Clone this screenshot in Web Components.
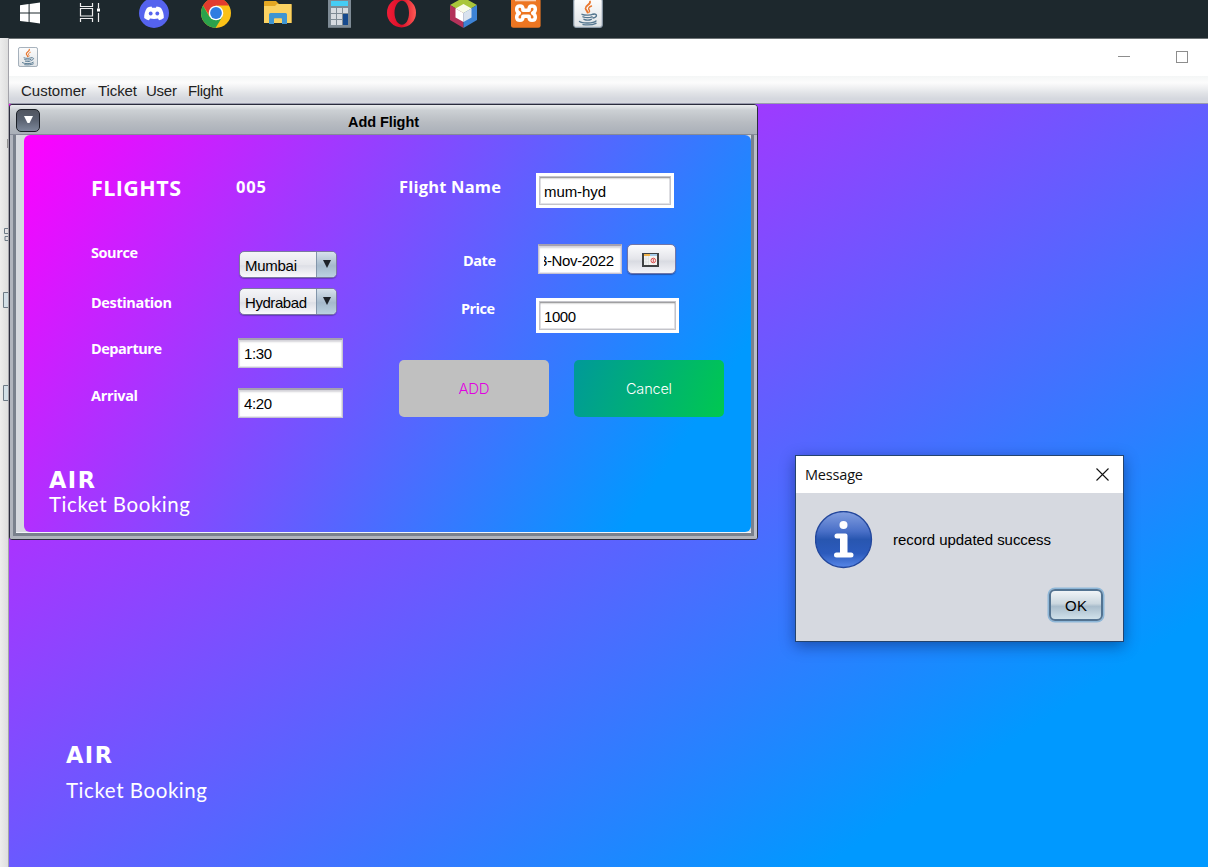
<!DOCTYPE html>
<html lang="en">
<head>
<meta charset="utf-8">
<title>Air Ticket Booking</title>
<style>
body{margin:0;width:1208px;height:867px;overflow:hidden;background:#e9e9e9;font-family:"Liberation Sans",Arial,sans-serif}
</style>
</head>
<body>
<air-app></air-app>
<script>
function define(name, html, setup) {
  const t = document.createElement('template');
  t.innerHTML = html;
  customElements.define(name, class extends HTMLElement {
    constructor() {
      super();
      this.attachShadow({mode: 'open'}).append(t.content.cloneNode(true));
    }
    connectedCallback() { if (setup) setup(this, this.shadowRoot); }
  });
}

/* One line of text, tracked so that it spans the width given in "w". */
define('fit-text', `<style>
:host{display:block;white-space:nowrap;line-height:20px;height:20px;flex:none}
:host([kind=label]){font:bold 14.5px/20px "Open Sans","Noto Sans",sans-serif;color:#fff}
:host([kind=sub]){font:bold 16.5px/20px "Open Sans","Noto Sans",sans-serif;color:#fff}
:host([kind=title]){font:bold 21.5px/30px "Open Sans","Noto Sans",sans-serif;height:30px;color:#fff}
:host([kind=air]){font:bold 22.5px/30px "DejaVu Sans",sans-serif;height:28px;color:#fff}
:host([kind=tag]){font:400 20.5px/26px Lato,sans-serif;height:26px;color:#fff}
:host([kind=swing]){font:15px/20px "Liberation Sans",Arial,sans-serif}
span{display:inline-block}
</style><span><slot></slot></span>`, (el, root) => {
  const s = root.querySelector('span');
  const w = +el.getAttribute('w');
  const n = el.textContent.length;
  if (w && n > 1) {
    const gap = (w - s.getBoundingClientRect().width) / (n - 1);
    s.style.letterSpacing = gap.toFixed(3) + 'px';
    s.style.marginRight = (-gap).toFixed(3) + 'px';
  }
});

define('java-icon', `<style>:host{display:block}svg{display:block;width:100%;height:100%}</style>
<svg viewBox="0 0 30 30"><defs><linearGradient id="g" x2="0" y2="1"><stop stop-color="#fdfdfd"/><stop offset="1" stop-color="#dfe3e6"/></linearGradient></defs>
<rect x=".7" y=".7" width="28.6" height="28.6" rx="2.5" fill="url(#g)" stroke="#8b9aa8" stroke-width="1.2"/>
<g fill="none" stroke-linecap="round"><path d="M17 3.500c1 3-5 4-4.500 7 .2 1.500 2 2.400 2 4" stroke="#e8762d" stroke-width="1.800"/><path d="M18.500 8c-3 1.300-3.500 2.600-2.300 4 .7.900.4 1.800-.4 2.600" stroke="#e8762d" stroke-width="1.400"/>
<path d="M9 16.300c3 1.200 9 1 11-.2M10 18.800c2.500 1 7 1 9 0M11 21.300c2 .9 5.500.9 7.300 0M20.500 16.200c4-1 4 3-.5 3.800M6.500 23.500c3 2.300 14 2 16.500-.5M10 26.600c5 .6 10 .2 13-1.300" stroke="#54768f" stroke-width="1.400"/></g></svg>`);

define('task-bar', `<style>
:host{display:block;height:38px;background:#1d282d;overflow:hidden}
.row{display:flex;height:30px;align-items:flex-start}
svg{display:block;flex:none;overflow:visible}
java-icon{width:30px;height:30px;margin:-2px 0 0 32px;flex:none}
</style>
<div class="row">
<svg style="margin-left:20px" width="20" height="24" viewBox="0 0 20 24" fill="#fff"><path d="M0 5.200 8.600 4v8.500H0zM9.600 3.900 20 2.500v10H9.600zM0 13.500h8.600v8.600L0 20.900zM9.600 13.500H20v10l-10.400-1.400z"/></svg>
<svg style="margin-left:39px" width="22" height="24" viewBox="0 0 22 24" fill="none" stroke="#eee" stroke-width="1.200"><path d="M1.500 3v3.500h12V3M1.500 22v-3.500h12V22M1.500 8.500v7.500h12V8.500zM19.500 3v5.500M19.500 13v9"/><path d="M18 8.500h3v3h-3z" fill="#fff" stroke="none"/></svg>
<svg style="margin-left:38px" width="30" height="28" viewBox="0 0 30 28"><circle cx="15" cy="13" r="15" fill="#5563ee"/><path fill="#fff" d="M12.500 6.500c-2 .2-3.600.9-4.500 1.500-2 3-3 6.500-2.800 10 1.500 1.200 3.200 2 4.800 2.300l1-1.800c2.500.6 5.500.6 8 0l1 1.800c1.700-.4 3.300-1.100 4.800-2.300.2-3.500-.8-7-2.800-10-1-.7-2.600-1.300-4.500-1.500l-.6 1.200h-3.800z"/><ellipse cx="11.700" cy="13.500" rx="1.900" ry="2.100" fill="#5563ee"/><ellipse cx="18.300" cy="13.500" rx="1.900" ry="2.100" fill="#5563ee"/></svg>
<svg style="margin-left:32px" width="30" height="28" viewBox="0 0 30 28"><circle cx="15" cy="13" r="15" fill="#fbc116"/><path d="M2 5.500A15 15 0 0 1 28 5.500H15L9.300 17z" fill="#e33b2e"/><path d="M2 5.500A15 15 0 0 0 14.500 28l7-11.500-6.500 3.500-7-4z" fill="#2ba24c"/><circle cx="15" cy="13" r="7.300" fill="#fff"/><circle cx="15" cy="13" r="5.900" fill="#2f7de1"/></svg>
<svg style="margin-left:33px" width="28" height="26" viewBox="0 0 28 26"><path d="M0 2q0-1 1-1h11l3 3h11.500q1 0 1 1v18H0z" fill="#e5a823"/><path d="M0 6h11l2-2h14.500v19H0z" fill="#fbd262"/><path d="M5 24V14.500q0-1.500 1.500-1.500h15q1.500 0 1.500 1.500V24h-5v-5q0-.8-.8-.8h-6.400q-.8 0-.8.800v5z" fill="#3f95d2"/></svg>
<svg style="margin-left:36px" width="23" height="28" viewBox="0 0 23 28"><path d="M0-2h23v29.800H0z" fill="#7e8b95"/><path d="M3 1h17v5H3z" fill="#46cdf4"/><path d="M3 8h5v5H3zM9 8h5v5H9zM15 8h5v5h-5zM3 14h5v5H3zM9 14h5v5H9zM3 20h5v5H3zM9 20h5v5H9z" fill="#d6dbe0"/><path d="M15 14h5v11h-5z" fill="#164a8e"/></svg>
<svg style="margin-left:36px" width="29" height="28" viewBox="0 0 29 28"><defs><linearGradient id="o" x2="1"><stop stop-color="#f11d37"/><stop offset=".5" stop-color="#d80f28"/><stop offset="1" stop-color="#ff5a55"/></linearGradient></defs><path fill="url(#o)" fill-rule="evenodd" d="M14.500-2a14.500 14.700 0 1 0 0 29.400 14.500 14.700 0 1 0 0-29.400M15 .8c4 0 7 5 7 12s-3 12-7 12-7.500-5-7.500-12S11 .8 15 .8"/></svg>
<svg style="margin-left:34px" width="27" height="28" viewBox="0 0 27 28"><path d="M0 5 13.500-2.500 27 5l-13.500 8z" fill="#a9c63b"/><path d="M0 5v15l13.500 8V13z" fill="#b4325a"/><path d="M27 5v15l-13.500 8V13z" fill="#3d83d6"/><path d="m5.500 8.500 8-4.500 8 4.500-8 4.500z" fill="#f8fbe9"/><path d="M5.500 8.500v9l8 4.500v-9z" fill="#fff"/><path d="M21.500 8.500v9l-8 4.500v-9z" fill="#d9e2ee"/></svg>
<svg style="margin-left:34px" width="30" height="28" viewBox="0 0 30 28"><rect y="-2" width="29.600" height="29.800" rx="2.500" fill="#ed7622"/><path d="M4 0h21v1.300H4z" fill="#f8ceb0"/><g fill="none" stroke="#fff" stroke-width="3.500" stroke-linecap="round" stroke-linejoin="round"><path d="M12 9.500Q12 6 9 6 5.700 6 5.700 9.200 5.700 11.700 8.300 13.100 5.700 14.500 5.700 17.200 5.700 20.300 9 20.300 12 20.300 12 17"/><path d="M18 9.500Q18 6 21 6 24.300 6 24.300 9.200 24.300 11.700 21.700 13.100 24.300 14.500 24.300 17.200 24.300 20.300 21 20.300 18 20.300 18 17"/><path d="M12 10.300h6M12 16.200h6"/></g></svg>
<java-icon></java-icon>
</div>`);

define('title-bar', `<style>
:host{display:flex;height:37px;background:#fff;align-items:flex-start;justify-content:space-between;border-top:1px solid #6d7375}
java-icon{width:20px;height:20px;margin:8px 0 0 9px}
.c{display:flex;gap:46px;padding:12px 20px 0 0}
i{display:block;width:12px}.min{height:0;border-top:1px solid #8d8d8d;margin-top:5px}
.max{box-sizing:border-box;height:12px;border:1px solid #8d8d8d}
</style><java-icon></java-icon><div class="c"><i class="min"></i><i class="max"></i></div>`);

define('menu-bar', `<style>
:host{display:flex;box-sizing:border-box;height:28px;padding:5px 0 0 12px;color:#222;background:linear-gradient(#f4f6f6,#fcfcfc 25%,#e0e2e6 65%,#d4d7de 85%,#d7d9df);border-bottom:1px solid #9a9cae}
fit-text+fit-text{margin-left:var(--g)}
</style>
<fit-text kind="swing" w="65">Customer</fit-text><fit-text kind="swing" w="39" style="--g:12px">Ticket</fit-text><fit-text kind="swing" w="31" style="--g:9px">User</fit-text><fit-text kind="swing" w="35" style="--g:11px">Flight</fit-text>`);

define('swing-field', `<style>
:host{display:flex;box-sizing:border-box;align-items:center;height:30px;width:105px;padding-left:5px;background:#fff;border:1px solid rgba(150,145,175,.55);border-top:2px solid #a4a0b0;box-shadow:inset 0 2px 2px #d5d4da,inset 0 0 0 1px rgba(190,185,210,.35);color:#000}
:host([framed]){height:35px;padding-left:5px;border:3px solid #fff;box-shadow:inset 0 0 0 1px #c4c4ca,inset 0 2px 2px #888,inset 0 0 0 2px #e3e3e7}
:host([clip]){width:84px;padding:0 7px 0 5px}
div{display:flex;width:100%;overflow:hidden}
:host([framed]) div,:host([clip]) div{position:relative;top:1px}
:host([clip]) div{justify-content:flex-end}
</style><div><slot></slot></div>`);

define('combo-box', `<style>
:host{display:flex;box-sizing:border-box;width:98px;height:27px;border:1px solid #7b78a0;border-radius:5px;overflow:hidden;background:linear-gradient(#f5f5f8,#e6e7ec 50%,#dddfe6 55%,#fafafc);box-shadow:0 1px 1px rgba(50,40,120,.45)}
.v{flex:1;padding:4px 0 0 5px;color:#000}
.a{width:20px;box-sizing:border-box;border-left:1px solid #8295aa;background:linear-gradient(#d7e2ec,#a5b9cb 55%,#bbd2e1);display:flex;justify-content:center}
svg{margin-top:8px}
</style><div class="v"><slot></slot></div><div class="a"><svg width="8" height="8"><path d="M0 0h8L4 8z" fill="#1d2228"/></svg></div>`);

define('flat-button', `<style>
:host{display:flex;align-items:center;justify-content:center;width:150px;height:57px;border-radius:5px;flex:none}
:host([kind=add]){background:#c0c0c0;color:#e000e0}
:host([kind=cancel]){background:linear-gradient(111deg,#009999,#00c850);color:#fff}
::slotted(*){font-family:Inter,sans-serif!important;font-weight:300!important}
</style><slot></slot>`);

define('calendar-button', `<style>
:host{display:flex;box-sizing:border-box;width:49px;height:30px;border:1px solid #7176a8;border-radius:5px;background:linear-gradient(#fbfbfd,#e4e5ea 50%,#d9dbe2 58%,#f4f4f8);box-shadow:0 1px 1px rgba(30,40,90,.5);align-items:center;justify-content:center}
svg{margin:1px 2px 0 0}
</style><svg width="17" height="14" viewBox="0 0 17 14"><path d="M0 0h17v14H0z" fill="#3f4142"/><path d="M2 1h6v2H2z" fill="#f1b34a"/><path d="M8 1h7v2H8z" fill="#a5cbe8"/><path d="M2 3h13v9H2z" fill="#f3f3f1"/><path d="M4 3v9M6.500 3v9M2 6h5M2 9h5" stroke="#d9dcdc" stroke-width=".6"/><circle cx="11.300" cy="7.500" r="2.300" fill="none" stroke="#dc4c4c"/><path d="M11.300 6v3" stroke="#dc4c4c"/></svg>`);

define('brand-mark', `<style>:host{display:flex;flex-direction:column;gap:var(--brand-gap,0)}
fit-text[kind=tag]{margin-top:var(--brand-gap,0)}</style>
<fit-text kind="air" w="46">AIR</fit-text><fit-text kind="tag" w="141">Ticket Booking</fit-text>`);

define('flight-form', `<style>
:host{display:flex;box-sizing:border-box;width:727px;height:397px;border-radius:6px;padding-top:38px;background:linear-gradient(123.490deg,#f0f 0,#09f 719px)}
.names{width:189px;padding-left:25px;box-sizing:border-box}
.names>fit-text{margin-left:42px}
brand-mark{--brand-gap:-2.500px}
.values{width:186px}
.right{width:325px}
.line{display:flex}
.line>fit-text{width:var(--lw);margin-left:var(--ml,0)}
.btns{display:flex;gap:25px;margin-top:27px}
</style>
<div class="names">
<fit-text kind="title" w="90">FLIGHTS</fit-text>
<fit-text kind="label" w="47" style="margin-top:40px">Source</fit-text>
<fit-text kind="label" w="81" style="margin-top:30px">Destination</fit-text>
<fit-text kind="label" w="71" style="margin-top:26px">Departure</fit-text>
<fit-text kind="label" w="47" style="margin-top:27px">Arrival</fit-text>
<brand-mark style="margin-top:59px"></brand-mark>
</div>
<div class="values">
<fit-text kind="sub" w="30" style="margin:4px 0 0 23px">005</fit-text>
<combo-box style="margin:54px 0 0 26px"><fit-text kind="swing" w="52">Mumbai</fit-text></combo-box>
<combo-box style="margin:10px 0 0 26px"><fit-text kind="swing" w="62">Hydrabad</fit-text></combo-box>
<swing-field style="margin:23px 0 0 25px"><fit-text kind="swing" w="28">1:30</fit-text></swing-field>
<swing-field style="margin:20px 0 0 25px"><fit-text kind="swing" w="28">4:20</fit-text></swing-field>
</div>
<div class="right">
<div class="line"><fit-text kind="sub" w="102" style="--lw:137px;margin-top:4px">Flight Name</fit-text><swing-field framed style="width:138px"><fit-text kind="swing" w="62">mum-hyd</fit-text></swing-field></div>
<div class="line" style="margin-top:36px"><fit-text kind="label" w="33" style="--ml:64px;--lw:75px;margin-top:7px">Date</fit-text><swing-field clip><fit-text kind="swing" w="75">3-Nov-2022</fit-text></swing-field><calendar-button style="margin-left:5px"></calendar-button></div>
<div class="line" style="margin-top:24px"><fit-text kind="label" w="34" style="--ml:62px;--lw:75px;margin-top:1px">Price</fit-text><swing-field framed style="width:143px"><fit-text kind="swing" w="32">1000</fit-text></swing-field></div>
<div class="btns"><flat-button kind="add"><fit-text w="31" style="font-size:15px">ADD</fit-text></flat-button><flat-button kind="cancel"><fit-text w="46" style="font-size:14.500px">Cancel</fit-text></flat-button></div>
</div>`);

/* Child window inside the desktop pane. */
define('internal-frame', `<style>
:host{display:block;box-sizing:border-box;width:749px;height:436px;border:1px solid #2b2c3d;border-radius:3px 4px 3px 3px;background:#abb0ba;overflow:hidden}
.t{display:flex;box-sizing:border-box;height:30px;background:linear-gradient(#eceef0,#ccd0d4 18%,#b8bcc2 60%,#a9afb8);border-bottom:1px solid #858a98;color:#000}
.m{box-sizing:border-box;width:24px;height:23px;margin:4px 0 0 6px;border:1px solid #1b2027;border-radius:5px;background:linear-gradient(#50555f,#596170 45%,#7c8799);display:flex;justify-content:center}
.m svg{margin-top:6px}
.t fit-text{margin:7px 0 0 308px;font:bold 14.500px/20px "Liberation Sans",Arial,sans-serif}
.b{height:401px;border:3px solid #b0b4bd;border-top:0;border-right-color:#b9bec7}
.d{box-sizing:border-box;display:flex;height:401px;border:3px solid #7a818d;border-top:0;background:#d6d9df;padding-left:8px;box-shadow:inset 0 -1px #f2f5fa}
</style>
<div class="t"><div class="m"><svg width="9" height="8"><path d="M0 0h9L5.500 7h-2z" fill="#fff"/></svg></div><fit-text w="71">Add Flight</fit-text></div>
<div class="b"><div class="d"><slot></slot></div></div>`);

define('message-dialog', `<style>
:host{display:block;box-sizing:border-box;width:329px;height:187px;border:1px solid #24446f;background:#d6d9e0;box-shadow:0 4px 14px rgba(0,20,70,.45);color:#000}
.t{display:flex;justify-content:space-between;height:37px;background:#fff}
.t fit-text{margin:9px 0 0 9px;font:14.500px/20px "Open Sans","Noto Sans",sans-serif;color:#111}
.t svg{margin:12px 14px 0 0}
.c{display:flex;padding:18px 0 0 19px}
.c fit-text{margin:19px 0 0 20px}
.ok{box-sizing:border-box;width:54px;height:32px;margin:20px 0 0 253px;border:2px solid #537391;border-radius:6px;background:linear-gradient(#f0f4f7,#cbd7df 45%,#a9bdcc 55%,#d0e1ea);box-shadow:0 0 0 1.500px #8eb7d8;display:flex;align-items:center;justify-content:center}
.ok fit-text{padding-top:1px}
</style>
<div class="t"><fit-text w="58">Message</fit-text><svg width="13" height="13"><path d="M.5.5l12 12M12.500.5l-12 12" stroke="#111" stroke-width="1.100"/></svg></div>
<div class="c"><svg width="58" height="58" viewBox="0 0 58 58"><defs><linearGradient id="i" x2="0" y2="1"><stop stop-color="#839fe0"/><stop offset=".35" stop-color="#4a70c8"/><stop offset=".5" stop-color="#2856b0"/><stop offset=".75" stop-color="#2c5bbd"/><stop offset="1" stop-color="#5787e8"/></linearGradient></defs><circle cx="28.500" cy="28.500" r="28" fill="url(#i)" stroke="#23479c" stroke-width="1.300"/><g fill="#fff"><circle cx="28.500" cy="14" r="4"/><path d="M22 22.500h8.500q2 0 2 2V41.500H36q2.500 0 2.500 2.500T36 46.500H21.500q-2.500 0-2.500-2.500t2.500-2.500H25V27.500h-3q-2.500 0-2.500-2.500t2.500-2.500z"/></g></svg><fit-text kind="swing" w="158">record updated success</fit-text></div>
<div class="ok"><fit-text kind="swing" w="22">OK</fit-text></div>`);

/* Free canvas: child windows float over the gradient. */
define('desktop-pane', `<style>
:host{display:block;position:relative;flex:1;box-sizing:border-box;background:linear-gradient(146.460deg,#f0f 0,#09f 1086px);padding:636px 0 0 57px}
internal-frame{position:absolute;left:0;top:0}
message-dialog{position:absolute;left:786px;top:351px}
brand-mark{--brand-gap:4.500px}
</style>
<brand-mark></brand-mark>
<internal-frame><flight-form></flight-form></internal-frame>
<message-dialog></message-dialog>`);

/* Sliver of the window lying behind the application. */
define('back-edge', `<style>
:host{display:block;width:9px;box-sizing:border-box;flex:none;border-right:1px solid #a3a3aa;background:linear-gradient(90deg,#ededed,#dedede)}
svg{display:block}
</style><svg width="8" height="370" fill="none" stroke="#6d7a86"><path d="M8 101v9" stroke="#444"/><path d="M8 190.500H4.500v5H8M8 198.500H5v4h3"/><path d="M8 254.500H3.500v15H8M8 347.500H3.500v15H8" fill="#d2dfe7"/></svg>`);

define('air-app', `<style>
:host{display:flex;flex-direction:column;width:1208px;height:867px}
.w{display:flex;flex:1}
main{display:flex;flex-direction:column;flex:1;min-width:0}
</style><task-bar></task-bar><div class="w"><back-edge></back-edge><main><title-bar></title-bar><menu-bar></menu-bar><desktop-pane></desktop-pane></main></div>`);
</script>
</body>
</html>
